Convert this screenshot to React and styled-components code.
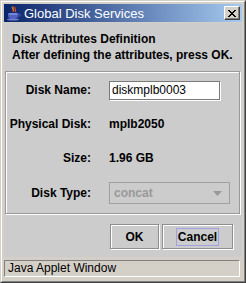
import React from 'react';
import styled, { createGlobalStyle } from 'styled-components';

const GlobalStyle = createGlobalStyle`
  html, body { margin: 0; padding: 0; background: #d4d0c8; }
  * { box-sizing: border-box; }
`;

const Frame = styled.div`
  width: 246px;
  height: 283px;
  border: 1px solid;
  border-color: #d4d0c8 #404040 #404040 #d4d0c8;
`;

const Window = styled.div`
  height: 100%;
  border: 1px solid;
  border-color: #ffffff #808080 #808080 #ffffff;
  padding: 2px;
  background: #d4d0c8;
  display: flex;
  flex-direction: column;
`;

const TitleBar = styled.div`
  height: 18px;
  display: flex;
  align-items: center;
  padding: 0 2px 0 2px;
  background: linear-gradient(to right, #0a246a, #a6caf0);
  color: #fff;
  font-family: "Liberation Sans", Arial, sans-serif;
  font-size: 13px;
`;

const Title = styled.span`
  flex: 1;
  margin-left: 2px;
`;

const CloseButton = styled.div`
  width: 16px;
  height: 14px;
  background: #d4d0c8;
  border: 1px solid;
  border-color: #fff #404040 #404040 #fff;
  box-shadow: inset -1px -1px #808080;
  display: flex;
  align-items: center;
  justify-content: center;
`;

const Content = styled.div`
  margin-top: 1px;
  flex: 1;
  background: #cccccc;
  display: flex;
  flex-direction: column;
  padding: 8px 2px 0 1px;
  font-family: "Liberation Sans", Arial, sans-serif;
  font-size: 12px;
  color: #000;
`;

const Header = styled.div`
  padding-left: 7px;
  font-weight: bold;
  line-height: 16px;
`;

const Panel = styled.div`
  margin-top: 8px;
  border: 1px solid #999999;
  box-shadow: inset 1px 1px #fff, 1px 1px #fff;
  padding: 8px 0 9px 1px;
  display: grid;
  grid-template-columns: 84px 1fr;
  grid-template-rows: 20px 20px 20px 22px;
  column-gap: 18px;
  row-gap: 14px;
  align-items: center;
`;

const Label = styled.div`
  text-align: right;
  font-weight: bold;
  white-space: nowrap;
`;

const Value = styled.div`
  font-weight: bold;
`;

const TextField = styled.div`
  width: 111px;
  height: 19px;
  background: #fff;
  border: 1px solid #7a7a7a;
  box-shadow: 1px 1px #fff;
  padding-left: 2px;
  line-height: 17px;
`;

const Combo = styled.div`
  width: 121px;
  height: 22px;
  border: 1px solid #a0a0a0;
  display: flex;
  align-items: center;
  justify-content: space-between;
  padding: 0 7px 0 4px;
  color: #999999;
  font-weight: bold;
`;

const ButtonRow = styled.div`
  margin-top: 10px;
  display: flex;
  justify-content: flex-end;
  gap: 3px;
  padding-right: 7px;
`;

const Button = styled.div`
  width: ${p => p.$w}px;
  height: 25px;
  border: 1px solid #8e8e8e;
  box-shadow: inset 1px 1px #fff, 1px 1px #fff;
  display: flex;
  align-items: center;
  justify-content: center;
  font-weight: bold;
`;

const Focus = styled.span`
  border: 1px solid #a0a0e0;
  padding: 0 1px;
  line-height: 16px;
`;

const StatusArea = styled.div`
  height: 22px;
  padding: 3px 0 2px 0;
`;

const StatusBox = styled.div`
  height: 17px;
  width: 236px;
  border: 1px solid;
  border-color: #808080 #fff #fff #808080;
  font-family: "Liberation Sans", Arial, sans-serif;
  font-size: 12px;
  line-height: 15px;
  padding-left: 3px;
`;

const JavaIcon = () => (
  <svg width="16" height="16" viewBox="0 0 16 16">
    <path d="M7 1c-1 2 2 3 0 6M9 2c-1 2 2 3 0 5" stroke="#e05020" strokeWidth="1.2" fill="none" />
    <path d="M6 2c0 2 2 2 1 4" stroke="#f0a030" strokeWidth="0.8" fill="none" />
    <path d="M2 8h10v3c0 2-2 3-5 3s-5-1-5-3z" fill="#5060c0" />
    <path d="M12 9h1.5c1 0 1 2 0 2H12" stroke="#5060c0" strokeWidth="1" fill="none" />
    <ellipse cx="7" cy="14.5" rx="6" ry="1" fill="#7080d0" />
    <path d="M3 9h8" stroke="#a0b0f0" strokeWidth="1" />
  </svg>
);

const CloseIcon = () => (
  <svg width="8" height="7" viewBox="0 0 8 7">
    <path d="M0 0L7 7M1 0L8 7M7 0L0 7M8 0L1 7" stroke="#000" strokeWidth="1" />
  </svg>
);

const Arrow = () => (
  <svg width="9" height="5" viewBox="0 0 9 5">
    <path d="M0 0h9L4.5 5z" fill="#999" />
  </svg>
);

const App = () => (
  <>
    <GlobalStyle />
    <Frame>
      <Window>
        <TitleBar>
          <JavaIcon />
          <Title>Global Disk Services</Title>
          <CloseButton><CloseIcon /></CloseButton>
        </TitleBar>
        <Content>
          <Header>
            <div>Disk Attributes Definition</div>
            <div>After defining the attributes, press OK.</div>
          </Header>
          <Panel>
            <Label>Disk Name:</Label>
            <TextField>diskmplb0003</TextField>
            <Label>Physical Disk:</Label>
            <Value>mplb2050</Value>
            <Label>Size:</Label>
            <Value>1.96 GB</Value>
            <Label>Disk Type:</Label>
            <Combo>concat<Arrow /></Combo>
          </Panel>
          <ButtonRow>
            <Button $w={49}>OK</Button>
            <Button $w={71}><Focus>Cancel</Focus></Button>
          </ButtonRow>
        </Content>
        <StatusArea>
          <StatusBox>Java Applet Window</StatusBox>
        </StatusArea>
      </Window>
    </Frame>
  </>
);

export default App;
